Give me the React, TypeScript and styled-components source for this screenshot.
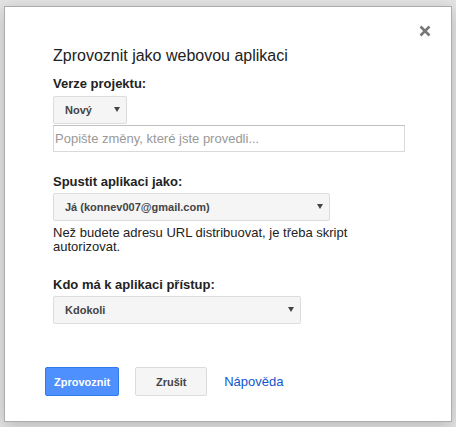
import React, { FC } from 'react';
import styled, { createGlobalStyle } from 'styled-components';

const GlobalStyle = createGlobalStyle`
  html, body {
    margin: 0;
    padding: 0;
    background: #e4e4e4;
  }
  body {
    font-family: 'Liberation Sans', Arial, sans-serif;
    height: 427px;
    overflow: hidden;
  }
`;

const Dialog = styled.div`
  position: relative;
  box-sizing: border-box;
  margin: 6px 0 0 4px;
  width: 448px;
  height: 416px;
  padding: 40px 40px 0 40px;
  background: #fff;
  border: 1px solid #acacac;
  box-shadow: 0 4px 16px rgba(0, 0, 0, 0.2);
  color: #222;
`;

const CloseButton = styled.button`
  position: absolute;
  top: 17px;
  right: 19px;
  width: 14px;
  height: 14px;
  padding: 0;
  border: 0;
  background: none;
  display: flex;
  align-items: center;
  justify-content: center;
  cursor: pointer;
`;

const Body = styled.div`
  padding-left: 8px;
  display: flex;
  flex-direction: column;
  align-items: flex-start;
`;

const Title = styled.h2`
  margin: 0;
  font-size: 16px;
  line-height: 18px;
  font-weight: normal;
  color: #222;
`;

const Label = styled.div<{ $gap: number }>`
  margin-top: ${(p) => p.$gap}px;
  font-size: 13px;
  line-height: 16px;
  font-weight: bold;
  color: #222;
`;

const Select = styled.div<{ $width: number; $gap: number }>`
  box-sizing: border-box;
  display: flex;
  align-items: center;
  justify-content: space-between;
  width: ${(p) => p.$width}px;
  height: 28px;
  margin-top: ${(p) => p.$gap}px;
  padding: 0 6px 0 11px;
  background: #f5f5f5;
  border: 1px solid #dcdcdc;
  border-radius: 2px;
  font-size: 11px;
  font-weight: bold;
  color: #444;
  &::after {
    content: '';
    border-left: 3px solid transparent;
    border-right: 3px solid transparent;
    border-top: 5px solid #444;
    margin-top: -1px;
  }
`;

const TextBox = styled.input`
  box-sizing: border-box;
  width: 352px;
  height: 27px;
  margin-top: 1px;
  padding: 0 2px 0 1px;
  border: 1px solid #d9d9d9;
  border-top-color: #c0c0c0;
  font-family: inherit;
  font-size: 13px;
  color: #222;
  outline: none;
  &::placeholder {
    color: #999;
  }
`;

const Hint = styled.p`
  margin: 5px 0 0;
  width: 320px;
  font-size: 13px;
  line-height: 14px;
  color: #222;
`;

const Footer = styled.div`
  display: flex;
  align-items: center;
  gap: 16px;
  margin-top: 43px;
`;

const Button = styled.button<{ $primary?: boolean }>`
  box-sizing: border-box;
  min-width: 72px;
  height: 29px;
  padding: 0 8px;
  border-radius: 2px;
  font-family: inherit;
  font-size: 11px;
  font-weight: bold;
  border: 1px solid ${(p) => (p.$primary ? '#3079ed' : '#dcdcdc')};
  background: ${(p) => (p.$primary ? '#4d90fe' : '#f5f5f5')};
  color: ${(p) => (p.$primary ? '#fff' : '#444')};
  cursor: pointer;
`;

const HelpLink = styled.a`
  margin-left: 1px;
  font-size: 13px;
  color: #15c;
  text-decoration: none;
`;

const App: FC = () => (
  <>
    <GlobalStyle />
    <Dialog>
      <CloseButton aria-label="Zavřít">
        <svg width="12" height="12" viewBox="0 0 12 12">
          <path d="M1.5 1.5 L10.5 10.5 M10.5 1.5 L1.5 10.5" stroke="#777" strokeWidth="2.6" />
        </svg>
      </CloseButton>
      <Body>
        <Title>Zprovoznit jako webovou aplikaci</Title>
        <Label $gap={11}>Verze projektu:</Label>
        <Select $width={74} $gap={4}>Nový</Select>
        <TextBox placeholder="Popište změny, které jste provedli..." />
        <Label $gap={22}>Spustit aplikaci jako:</Label>
        <Select $width={277} $gap={3}>Já (konnev007@gmail.com)</Select>
        <Hint>Než budete adresu URL distribuovat, je třeba skript autorizovat.</Hint>
        <Label $gap={23}>Kdo má k aplikaci přístup:</Label>
        <Select $width={248} $gap={3}>Kdokoli</Select>
      </Body>
      <Footer>
        <Button $primary>Zprovoznit</Button>
        <Button>Zrušit</Button>
        <HelpLink href="#">Nápověda</HelpLink>
      </Footer>
    </Dialog>
  </>
);

export default App;
